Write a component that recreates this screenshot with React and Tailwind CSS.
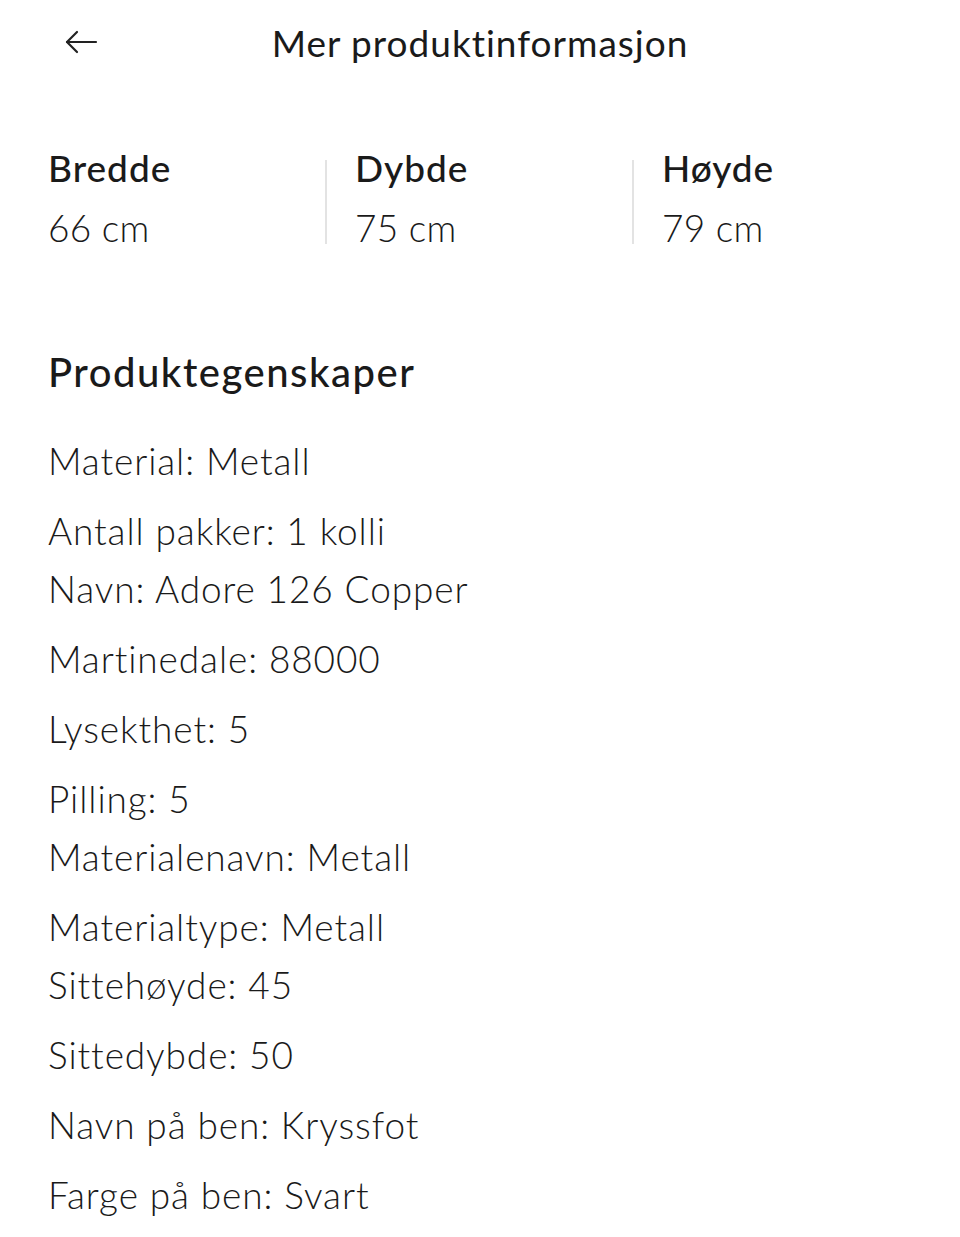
import React from "react";

const dims = [
  { label: "Bredde", value: "66 cm" },
  { label: "Dybde", value: "75 cm" },
  { label: "Høyde", value: "79 cm" },
];

const groups = [
  ["Material: Metall"],
  ["Antall pakker: 1 kolli", "Navn: Adore 126 Copper"],
  ["Martinedale: 88000"],
  ["Lysekthet: 5"],
  ["Pilling: 5", "Materialenavn: Metall"],
  ["Materialtype: Metall", "Sittehøyde: 45"],
  ["Sittedybde: 50"],
  ["Navn på ben: Kryssfot"],
  ["Farge på ben: Svart"],
];

export default function App() {
  return (
    <div
      className="w-[960px] min-h-[1237px] bg-white text-[#1a1a1a] [font-variant-ligatures:none]"
      style={{ fontFamily: "Lato, 'Noto Sans', sans-serif" }}
    >
      <header className="relative flex h-[84px] items-center justify-center">
        <button className="absolute left-[62px] top-[26px] flex h-[32px] w-[38px] items-center justify-center text-[#222]">
          <svg width="34" height="24" viewBox="0 0 34 24" fill="none" stroke="currentColor" strokeWidth="2.2" strokeLinecap="round" strokeLinejoin="round">
            <path d="M32 12H3" />
            <path d="M13 2L3 12l10 10" />
          </svg>
        </button>
        <h1 className="text-[37px] font-normal leading-none tracking-[1px]">Mer produktinformasjon</h1>
      </header>

      <section className="mt-[60px] grid grid-cols-[307px_307px_307px] pl-[18px]">
        {dims.map((d, i) => (
          <div key={d.label} className="flex">
            {i > 0 ? (
              <div className="mr-[28px] mt-[16px] h-[84px] w-[2px] bg-[#e3e3e3]" />
            ) : (
              <div className="w-[30px]" />
            )}
            <div className="flex flex-col">
              <span className="text-[37px] font-medium leading-[48px] tracking-[1px]">{d.label}</span>
              <span className="mt-[12px] text-[37px] font-light leading-[48px] tracking-[0.3px]">{d.value}</span>
            </div>
          </div>
        ))}
      </section>

      <section className="mt-[92px] px-[48px]">
        <h2 className="text-[40px] font-medium leading-[56px] tracking-[1.5px]">Produktegenskaper</h2>
        <div className="mt-[32px] flex flex-col gap-[12px]">
          {groups.map((g, i) => (
            <p key={i} className="text-[37px] font-light leading-[58px] tracking-[0.9px]">
              {g.map((line, j) => (
                <span key={j} className="block">{line}</span>
              ))}
            </p>
          ))}
        </div>
      </section>
    </div>
  );
}
